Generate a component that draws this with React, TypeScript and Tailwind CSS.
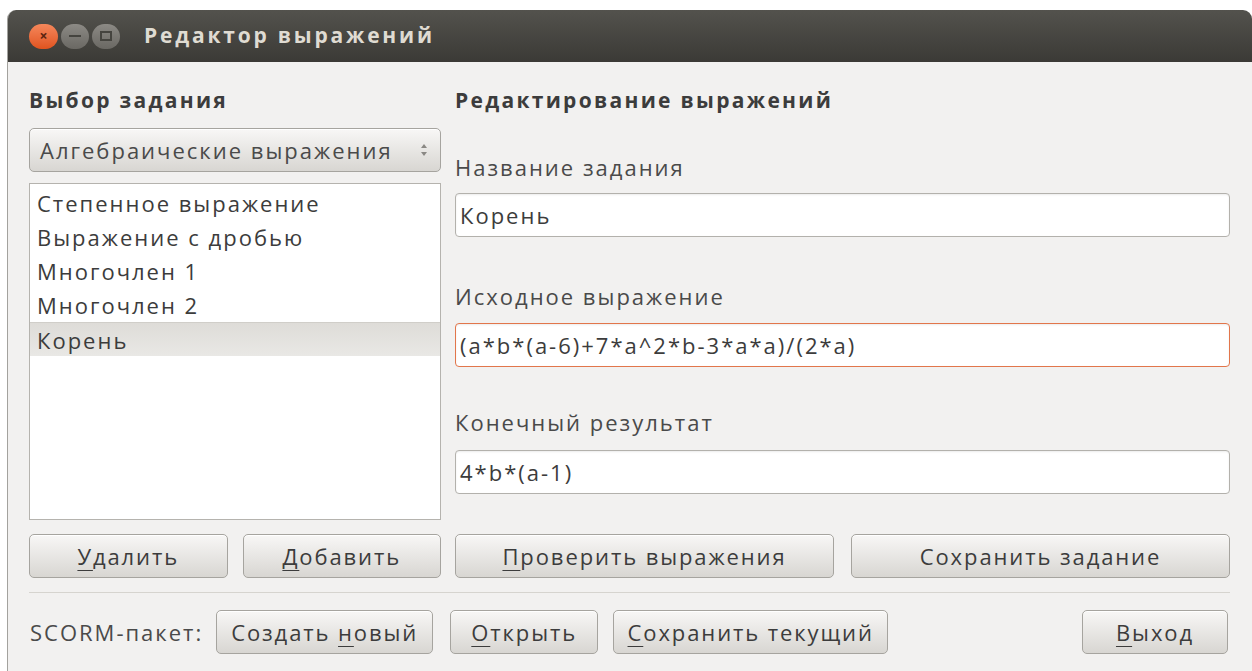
import type { ReactNode } from "react";

const TASKS = ["Степенное выражение", "Выражение с дробью", "Многочлен 1", "Многочлен 2", "Корень"];

const FONT = "font-['Open_Sans','DejaVu_Sans',sans-serif]";

// Letter with keyboard-mnemonic underline, GTK style
function Mn({ children }: { children: ReactNode }) {
  return <span className="underline decoration-1 underline-offset-[5px]">{children}</span>;
}

function Btn({ children, className = "" }: { children: ReactNode; className?: string }) {
  return (
    <button
      className={`flex h-[44px] items-center justify-center rounded-[5px] border border-[#a6a49f] bg-linear-to-b from-[#f8f7f6] to-[#d8d6d2] text-[22px] tracking-[1.9px] text-[#3c3c3c] shadow-[inset_0_1px_0_#ffffff] ${className}`}
    >
      <span>{children}</span>
    </button>
  );
}

function Field({ value, focused = false }: { value: string; focused?: boolean }) {
  return (
    <div
      className={`flex h-[44px] items-center rounded-[4px] border bg-white px-[4px] text-[22px] tracking-[2px] text-[#3c3c3c] shadow-[inset_0_1px_2px_rgba(0,0,0,0.08)] ${
        focused ? "border-[#e2764b]" : "border-[#b3b1ac]"
      }`}
    >
      {value}
    </div>
  );
}

function Label({ children, className = "" }: { children: ReactNode; className?: string }) {
  return <div className={`h-[28px] text-[22px] leading-[28px] tracking-[2px] text-[#4a4a4a] ${className}`}>{children}</div>;
}

function Heading({ children }: { children: ReactNode }) {
  return <div className="h-[28px] text-[21px] font-bold leading-[28px] tracking-[2.3px] text-[#3c3c3c]">{children}</div>;
}

function TitleButtons() {
  return (
    <div className="flex items-center gap-[3px]">
      <div className="flex h-[25px] w-[29px] items-center justify-center rounded-full bg-linear-to-b from-[#f5875a] to-[#e0531d] text-[14px] font-bold leading-none text-[#5a2510]">
        ×
      </div>
      <div className="flex h-[25px] w-[28px] items-center justify-center rounded-full bg-linear-to-b from-[#8c8a85] to-[#6a6863]">
        <div className="h-[2px] w-[12px] bg-[#45443f]" />
      </div>
      <div className="flex h-[25px] w-[28px] items-center justify-center rounded-full bg-linear-to-b from-[#8c8a85] to-[#6a6863]">
        <div className="h-[10px] w-[12px] border-2 border-[#45443f]" />
      </div>
    </div>
  );
}

export default function App() {
  return (
    <div className={`h-[671px] w-[1252px] overflow-hidden bg-white pl-[7px] pt-[10px] ${FONT}`}>
      <div className="flex h-[661px] flex-col overflow-hidden rounded-t-[9px] border-l border-[#a3a29e]">
        {/* title bar */}
        <div className="flex h-[52px] shrink-0 items-center bg-linear-to-b from-[#53524d] to-[#3b3a36] pl-[21px]">
          <TitleButtons />
          <span className="ml-[24px] text-[21px] font-bold tracking-[2.8px] text-[#dfdbd2]">Редактор выражений</span>
        </div>

        {/* dialog body */}
        <div className="flex flex-1 flex-col bg-[#f2f1f0] pl-[21px] pr-[22px] pt-[24px]">
          <div className="flex gap-[14px]">
            {/* task choice */}
            <div className="flex w-[412px] flex-col">
              <Heading>Выбор задания</Heading>
              <div className="mt-[14px] flex h-[44px] items-center justify-between rounded-[5px] border border-[#a6a49f] bg-linear-to-b from-[#f8f7f6] to-[#d8d6d2] pl-[10px] pr-[12px] text-[22px] tracking-[2px] text-[#4a4a4a] shadow-[inset_0_1px_0_#ffffff]">
                <span>Алгебраические выражения</span>
                <svg width="8" height="16" viewBox="0 0 8 16" className="text-[#8a8884]">
                  <path d="M1 6 L4 2 L7 6 Z" fill="currentColor" />
                  <path d="M1 10 L4 14 L7 10 Z" fill="currentColor" />
                </svg>
              </div>
              <div className="mt-[11px] h-[337px] border border-[#b5b3ae] bg-white pt-[2px]">
                {TASKS.map((t, i) => (
                  <div
                    key={t}
                    className={`h-[34px] pl-[7px] text-[22px] leading-[34px] tracking-[2px] text-[#3c3c3c] ${
                      i === TASKS.length - 1 ? "border-t border-[#d0cec9] bg-linear-to-b from-[#dedcd8] to-[#e9e8e5]" : ""
                    }`}
                  >
                    {t}
                  </div>
                ))}
              </div>
              <div className="mt-[14px] grid grid-cols-2 gap-[15px]">
                <Btn>
                  <Mn>У</Mn>далить
                </Btn>
                <Btn>
                  <Mn>Д</Mn>обавить
                </Btn>
              </div>
            </div>

            {/* expression editing */}
            <div className="flex w-[775px] flex-col">
              <Heading>Редактирование выражений</Heading>
              <Label className="mt-[39px]">Название задания</Label>
              <div className="mt-[12px]">
                <Field value="Корень" />
              </div>
              <Label className="mt-[45px]">Исходное выражение</Label>
              <div className="mt-[13px]">
                <Field value="(a*b*(a-6)+7*a^2*b-3*a*a)/(2*a)" focused />
              </div>
              <Label className="mt-[41px]">Конечный результат</Label>
              <div className="mt-[14px]">
                <Field value="4*b*(a-1)" />
              </div>
              <div className="mt-auto grid grid-cols-2 gap-[17px]">
                <Btn>
                  <Mn>П</Mn>роверить выражения
                </Btn>
                <Btn>Сохранить задание</Btn>
              </div>
            </div>
          </div>

          <div className="mt-[14px] h-[2px] border-t border-[#d6d4cf] border-b-white" />

          {/* SCORM package actions */}
          <div className="mt-[16px] flex items-center">
            <span className="ml-[1px] text-[22px] tracking-[2px] text-[#4a4a4a]">SCORM-пакет:</span>
            <Btn className="ml-[13px] w-[217px]">
              Создать <Mn>н</Mn>овый
            </Btn>
            <Btn className="ml-[17px] w-[148px]">
              <Mn>О</Mn>ткрыть
            </Btn>
            <Btn className="ml-[15px] w-[275px]">
              <Mn>С</Mn>охранить текущий
            </Btn>
            <Btn className="ml-auto mr-[2px] w-[146px]">
              <Mn>В</Mn>ыход
            </Btn>
          </div>
        </div>
      </div>
    </div>
  );
}
